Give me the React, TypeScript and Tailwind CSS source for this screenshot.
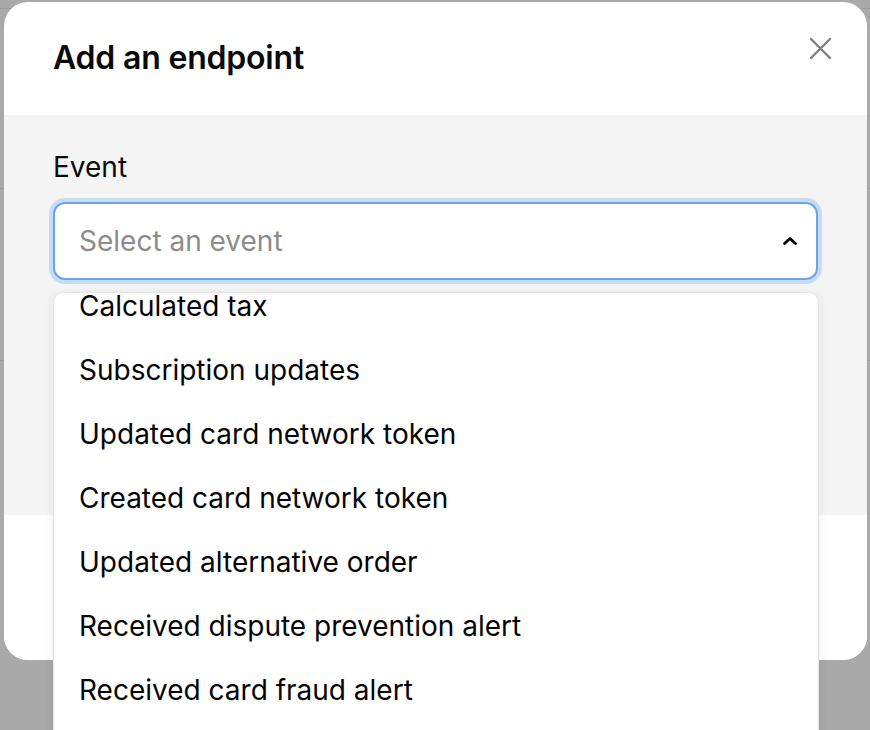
import React from "react";

const items = [
  "Calculated tax",
  "Subscription updates",
  "Updated card network token",
  "Created card network token",
  "Updated alternative order",
  "Received dispute prevention alert",
  "Received card fraud alert",
];

export default function App() {
  return (
    <div
      className="relative w-[870px] h-[730px] overflow-hidden bg-[#a9a9a9]"
      style={{ fontFamily: "Inter, 'Noto Sans', sans-serif" }}
    >
      {/* page behind the overlay */}
      <div className="flex flex-col">
        <div className="h-[9px] border-b border-[#9c9c9c]" />
        <div className="h-[180px] border-b border-[#9c9c9c]" />
        <div className="h-[172px] border-b border-[#9c9c9c]" />
      </div>

      {/* modal */}
      <div className="absolute left-[4px] top-[2px] w-[863px] h-[658px] rounded-[24px] bg-white overflow-hidden flex flex-col">
        <div className="h-[113px] shrink-0 flex items-center justify-between pl-[49px] pr-[35px]">
          <h2 className="text-[32px] leading-[40px] font-semibold text-[#0a0a0a] tracking-[-0.2px] mb-[2px]">
            Add an endpoint
          </h2>
          <svg width="24" height="24" viewBox="0 0 24 24" className="mb-[20px]">
            <path d="M3 2 L22 21 M22 2 L3 21" stroke="#7f7f7f" strokeWidth="2.4" strokeLinecap="round" fill="none" />
          </svg>
        </div>
        <div className="h-[400px] shrink-0 bg-[#f4f4f4] px-[49px] pt-[34px]">
          <div className="text-[28px] leading-[36px] text-[#0a0a0a]">Event</div>
          <div className="mt-[17px] h-[78px] rounded-[12px] border-2 border-[#6da4e8] bg-white shadow-[0_0_0_4px_#c6dbf4] flex items-center justify-between pl-[24px] pr-[18px]">
            <span className="text-[28px] text-[#8c8c8c]">Select an event</span>
            <svg width="16" height="12" viewBox="0 0 16 12">
              <path d="M2.5 8.5 L8 3.5 L13.5 8.5" stroke="#000" strokeWidth="2.8" fill="none" strokeLinecap="round" strokeLinejoin="round" />
            </svg>
          </div>
        </div>
        <div className="flex-1 bg-white" />
      </div>

      {/* dropdown list (scrolled) */}
      <div className="absolute left-[53px] top-[292px] w-[766px] h-[460px] rounded-[10px] border border-[#e4e4e4] bg-white shadow-[0_2px_10px_rgba(0,0,0,0.08)] overflow-hidden">
        <ul className="-mt-[19px]">
          {items.map((t) => (
            <li key={t} className="h-[64px] flex items-center pl-[25px] text-[28px] text-[#050505]">
              {t}
            </li>
          ))}
        </ul>
      </div>
    </div>
  );
}
